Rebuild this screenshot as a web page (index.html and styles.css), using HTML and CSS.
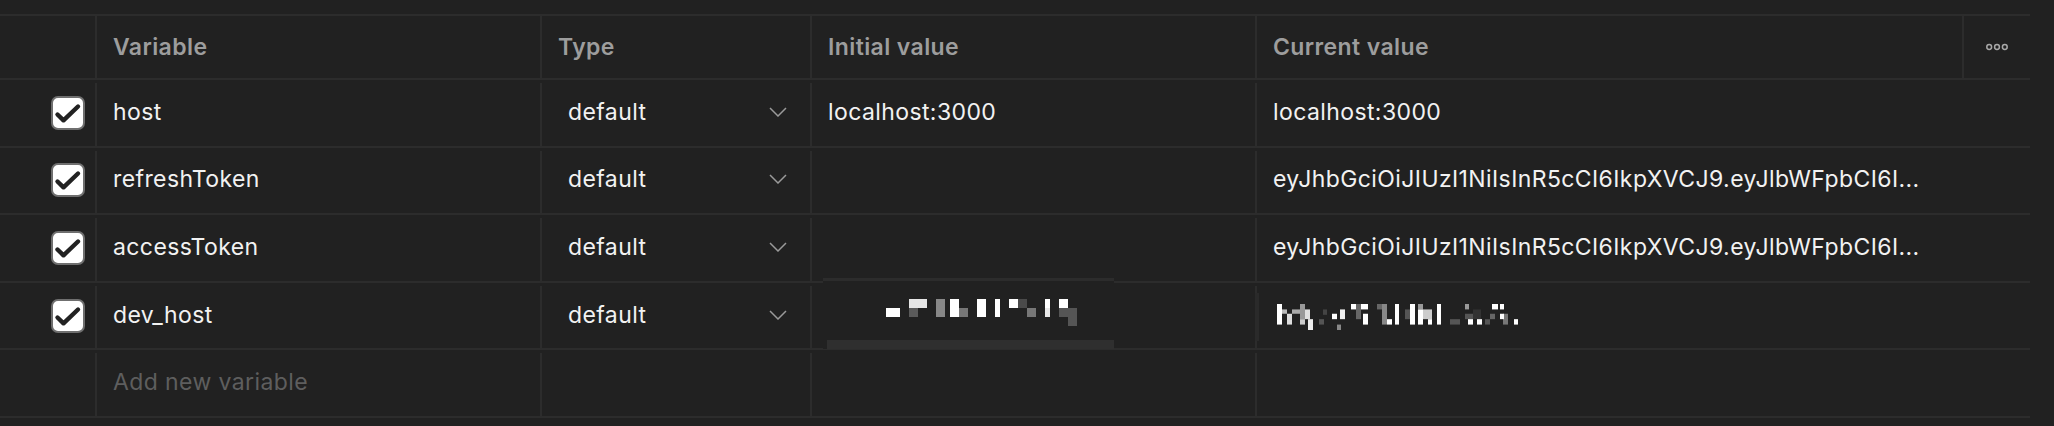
FILE: index.html
```html
<!DOCTYPE html>
<html lang="en">
<head>
<meta charset="utf-8">
<title>Environment variables</title>
<link rel="stylesheet" href="styles.css">
</head>
<body>
<div class="table">
  <div class="row head">
    <div class="cell c-check"></div>
    <div class="cell">Variable</div>
    <div class="cell">Type</div>
    <div class="cell">Initial value</div>
    <div class="cell">Current value</div>
    <div class="cell c-menu">
      <svg class="dots" width="22" height="8" viewBox="0 0 22 8"><circle cx="3.2" cy="4" r="2.4"/><circle cx="11" cy="4" r="2.4"/><circle cx="18.8" cy="4" r="2.4"/></svg>
    </div>
  </div>

  <div class="row">
    <div class="cell c-check"><svg class="cb" width="34" height="34" viewBox="0 0 34 34"><rect x="1" y="1" width="32" height="32" rx="6"/><path d="M6.5 18.5 L12.5 24.3 L27 10.5"/></svg></div>
    <div class="cell">host</div>
    <div class="cell c-type"><span>default</span><svg class="chev" width="18" height="10" viewBox="0 0 18 10"><path d="M1 1 L9 9 L17 1"/></svg></div>
    <div class="cell">localhost:3000</div>
    <div class="cell">localhost:3000</div>
  </div>

  <div class="row">
    <div class="cell c-check"><svg class="cb" width="34" height="34" viewBox="0 0 34 34"><rect x="1" y="1" width="32" height="32" rx="6"/><path d="M6.5 18.5 L12.5 24.3 L27 10.5"/></svg></div>
    <div class="cell">refreshToken</div>
    <div class="cell c-type"><span>default</span><svg class="chev" width="18" height="10" viewBox="0 0 18 10"><path d="M1 1 L9 9 L17 1"/></svg></div>
    <div class="cell"></div>
    <div class="cell">eyJhbGciOiJIUzI1NiIsInR5cCI6IkpXVCJ9.eyJlbWFpbCI6I...</div>
  </div>

  <div class="row">
    <div class="cell c-check"><svg class="cb" width="34" height="34" viewBox="0 0 34 34"><rect x="1" y="1" width="32" height="32" rx="6"/><path d="M6.5 18.5 L12.5 24.3 L27 10.5"/></svg></div>
    <div class="cell">accessToken</div>
    <div class="cell c-type"><span>default</span><svg class="chev" width="18" height="10" viewBox="0 0 18 10"><path d="M1 1 L9 9 L17 1"/></svg></div>
    <div class="cell"></div>
    <div class="cell">eyJhbGciOiJIUzI1NiIsInR5cCI6IkpXVCJ9.eyJlbWFpbCI6I...</div>
  </div>

  <div class="row">
    <div class="cell c-check"><svg class="cb" width="34" height="34" viewBox="0 0 34 34"><rect x="1" y="1" width="32" height="32" rx="6"/><path d="M6.5 18.5 L12.5 24.3 L27 10.5"/></svg></div>
    <div class="cell">dev_host</div>
    <div class="cell c-type"><span>default</span><svg class="chev" width="18" height="10" viewBox="0 0 18 10"><path d="M1 1 L9 9 L17 1"/></svg></div>
    <div class="cell c-redacted">
      <svg class="redact-a" width="291" height="71" viewBox="0 0 291 71">
        <rect x="0" y="0" width="291" height="71" fill="#212121"/>
        <rect x="0" y="0" width="291" height="3" fill="#2c2c2c"/>
        <rect x="4" y="62" width="287" height="9" fill="#2f2f2f"/>
        <rect x="63" y="30" width="14" height="9" fill="#ffffff"/>
        <rect x="86" y="21" width="18" height="9" fill="#e6e6e6"/>
        <rect x="86" y="30" width="9" height="9" fill="#5a5a5a"/>
        <rect x="113" y="21" width="9" height="18" fill="#888888"/>
        <rect x="127" y="21" width="9" height="18" fill="#ffffff"/>
        <rect x="136" y="30" width="9" height="9" fill="#777777"/>
        <rect x="154" y="21" width="9" height="18" fill="#ffffff"/>
        <rect x="172" y="21" width="5" height="18" fill="#ffffff"/>
        <rect x="186" y="21" width="9" height="9" fill="#ffffff"/>
        <rect x="195" y="21" width="9" height="9" fill="#4a4a4a"/>
        <rect x="204" y="30" width="9" height="9" fill="#777777"/>
        <rect x="222" y="21" width="5" height="9" fill="#ffffff"/>
        <rect x="222" y="30" width="5" height="9" fill="#e8e8e8"/>
        <rect x="236" y="21" width="9" height="9" fill="#ffffff"/>
        <rect x="236" y="30" width="9" height="9" fill="#555555"/>
        <rect x="245" y="30" width="9" height="18" fill="#555555"/>
      </svg>
    </div>
    <div class="cell c-redacted-cur">
      <svg class="redact-b" width="242" height="26" viewBox="0 0 242 24" preserveAspectRatio="none">
        <rect x="0" y="0" width="5" height="19" fill="#ffffff"/>
        <rect x="5" y="5" width="5" height="4" fill="#bbbbbb"/>
        <rect x="10" y="9" width="5" height="10" fill="#dddddd"/>
        <rect x="15" y="5" width="8" height="4" fill="#aaaaaa"/>
        <rect x="23" y="0" width="5" height="14" fill="#999999"/>
        <rect x="28" y="5" width="5" height="9" fill="#e0e0e0"/>
        <rect x="23" y="14" width="5" height="5" fill="#cccccc"/>
        <rect x="31" y="14" width="5" height="10" fill="#eeeeee"/>
        <rect x="42" y="14" width="5" height="5" fill="#555555"/>
        <rect x="46" y="5" width="4" height="5" fill="#444444"/>
        <rect x="55" y="9" width="5" height="5" fill="#ffffff"/>
        <rect x="60" y="19" width="4" height="5" fill="#888888"/>
        <rect x="63" y="5" width="5" height="9" fill="#f0f0f0"/>
        <rect x="74" y="0" width="5" height="5" fill="#ffffff"/>
        <rect x="79" y="0" width="5" height="14" fill="#666666"/>
        <rect x="84" y="0" width="7" height="5" fill="#ffffff"/>
        <rect x="86" y="9" width="5" height="10" fill="#ffffff"/>
        <rect x="100" y="0" width="5" height="5" fill="#666666"/>
        <rect x="105" y="0" width="5" height="19" fill="#888888"/>
        <rect x="110" y="14" width="5" height="5" fill="#ffffff"/>
        <rect x="118" y="0" width="4" height="19" fill="#ffffff"/>
        <rect x="128" y="5" width="5" height="9" fill="#555555"/>
        <rect x="133" y="0" width="5" height="19" fill="#ffffff"/>
        <rect x="141" y="0" width="5" height="5" fill="#999999"/>
        <rect x="141" y="5" width="5" height="14" fill="#ffffff"/>
        <rect x="146" y="5" width="9" height="9" fill="#cccccc"/>
        <rect x="151" y="14" width="4" height="5" fill="#ffffff"/>
        <rect x="160" y="0" width="4" height="19" fill="#ffffff"/>
        <rect x="173" y="14" width="10" height="5" fill="#555555"/>
        <rect x="188" y="0" width="4" height="5" fill="#999999"/>
        <rect x="188" y="9" width="8" height="5" fill="#555555"/>
        <rect x="191" y="14" width="5" height="5" fill="#ffffff"/>
        <rect x="196" y="5" width="8" height="9" fill="#333333"/>
        <rect x="200" y="14" width="5" height="5" fill="#ffffff"/>
        <rect x="208" y="14" width="5" height="5" fill="#555555"/>
        <rect x="213" y="9" width="5" height="5" fill="#666666"/>
        <rect x="215" y="0" width="6" height="5" fill="#ffffff"/>
        <rect x="223" y="0" width="4" height="5" fill="#ffffff"/>
        <rect x="226" y="9" width="5" height="10" fill="#777777"/>
        <rect x="223" y="9" width="4" height="5" fill="#ffffff"/>
        <rect x="237" y="14" width="4" height="5" fill="#ffffff"/>
      </svg>
    </div>
  </div>

  <div class="row">
    <div class="cell c-check"></div>
    <div class="cell placeholder">Add new variable</div>
    <div class="cell"></div>
    <div class="cell"></div>
    <div class="cell"></div>
  </div>
</div>
</body>
</html>
```

FILE: styles.css
```css
* {
  box-sizing: border-box;
}

body {
  margin: 0;
  background: #212121;
  font-family: Inter, "Noto Sans", sans-serif;
  color: #f2f2f2;
  font-size: 23px;
  letter-spacing: 0.4px;
}

.table {
  width: 2030px;
  padding-top: 14px;
}

.row {
  display: grid;
  grid-template-columns: 95px 445px 270px 445px 1fr;
  height: 67.6px;
  border-top: 2px solid #2c2c2c;
}

.row:last-child {
  height: 69.6px;
  border-bottom: 2px solid #2c2c2c;
}

.head {
  grid-template-columns: 95px 445px 270px 445px 707px 68px;
  height: 64px;
  color: #9d9d9d;
  font-weight: 600;
}

.cell {
  display: flex;
  align-items: center;
  padding-left: 18px;
  padding-bottom: 2px;
  white-space: nowrap;
  background: linear-gradient(#2c2c2c, #2c2c2c) no-repeat left 0 top 3px / 2px calc(100% - 3px);
}

.head .cell {
  background: linear-gradient(#2c2c2c, #2c2c2c) no-repeat left 0 top 0 / 2px 100%;
  padding-bottom: 1px;
}

.row .c-check {
  background: none;
  justify-content: flex-end;
  padding-left: 0;
  padding-right: 10px;
  padding-bottom: 0;
}

.c-menu {
  justify-content: center;
  padding-left: 2px;
}

.dots circle {
  fill: none;
  stroke: #a8a8a8;
  stroke-width: 1.5;
}

.cb rect {
  fill: #ffffff;
  stroke: #6f6f6f;
  stroke-width: 2;
}

.cb path {
  fill: none;
  stroke: #222222;
  stroke-width: 4.4;
  stroke-linecap: round;
  stroke-linejoin: round;
}

.c-type {
  padding-left: 28px;
  padding-right: 23px;
  justify-content: space-between;
}

.chev path {
  fill: none;
  stroke: #9a9a9a;
  stroke-width: 1.5;
}

.placeholder {
  color: #5e5e5e;
}

.c-redacted {
  position: relative;
}

.redact-a {
  position: absolute;
  left: 13px;
  top: -5px;
}

.c-redacted-cur {
  padding-left: 22px;
  background:
    linear-gradient(#2a2a2a, #2a2a2a) no-repeat left 0 top 10px / 4px 48px,
    linear-gradient(#2c2c2c, #2c2c2c) no-repeat left 0 top 3px / 2px calc(100% - 3px);
}

.redact-b {
  margin-top: 4px;
}
```
